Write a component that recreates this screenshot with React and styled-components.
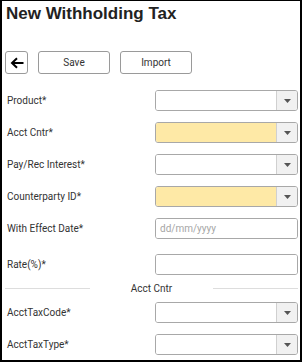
import React from "react";
import styled, { createGlobalStyle } from "styled-components";

const GlobalStyle = createGlobalStyle`
  body {
    margin: 0;
    background: #ffffff;
  }
  * {
    box-sizing: border-box;
  }
`;

const Frame = styled.div`
  width: 302px;
  height: 362px;
  border: 2px solid #000000;
  border-top-width: 1px;
  display: flex;
  flex-direction: column;
  background: #ffffff;
  font-family: Roboto, "Liberation Sans", sans-serif;
  color: #333333;
  overflow: hidden;
`;

const Title = styled.h1`
  margin: 2px 0 0 0;
  padding-left: 4px;
  font-family: "Liberation Sans", Arial, sans-serif;
  font-size: 17px;
  font-weight: bold;
  line-height: 21px;
  color: #222222;
`;

const Toolbar = styled.div`
  display: flex;
  gap: 10px;
  margin-top: 27px;
  padding-left: 3px;
`;

const Button = styled.button`
  width: ${(p) => (p.$square ? "23px" : "72px")};
  height: 23px;
  padding: 0;
  display: flex;
  align-items: center;
  justify-content: center;
  border: 1px solid #9a9a9a;
  border-radius: 3px;
  background: #ffffff;
  font-family: Roboto, "Liberation Sans", sans-serif;
  font-size: 10px;
  color: #333333;
`;

const Form = styled.div`
  display: flex;
  flex-direction: column;
  gap: 11px;
  margin-top: 16px;
  padding: 0 2px 0 5px;
`;

const Row = styled.div`
  display: flex;
  align-items: center;
  height: 21px;
  margin-top: ${(p) => p.$extra || 0}px;
`;

const Label = styled.span`
  flex: 1;
  font-size: 10px;
  color: #333333;
`;

const Field = styled.div`
  width: 143px;
  height: 21px;
  display: flex;
  border: 1px solid #a8a8a8;
  border-radius: 3px;
  overflow: hidden;
`;

const Input = styled.div`
  flex: 1;
  display: flex;
  align-items: center;
  padding-left: 4px;
  background: ${(p) => (p.$required ? "#fee9a6" : "#ffffff")};
  font-size: 10px;
  color: #a6a6a6;
`;

const Toggle = styled.div`
  width: 21px;
  display: flex;
  align-items: center;
  justify-content: center;
  border-left: 1px solid #d0d0d0;
  background: #f1f1f1;
`;

const Divider = styled.div`
  display: flex;
  align-items: center;
  height: 13px;
  margin: -4px 0;
  padding: 0 0 0 0;
  margin-left: -2px;
`;

const Line = styled.div`
  flex: 1;
  height: 1px;
  background: #dddddd;
`;

const DividerText = styled.span`
  padding: 0 41px;
  font-size: 10px;
  color: #333333;
`;

const BackArrow = () => (
  <svg width="14" height="12" viewBox="0 0 14 12">
    <path
      d="M13.5 6H2M7 1.2L2 6l5 4.8"
      fill="none"
      stroke="#000"
      strokeWidth="2"
    />
  </svg>
);

const Caret = () => (
  <svg width="7" height="4" viewBox="0 0 7 4">
    <path d="M0 0h7L3.5 4z" fill="#555" />
  </svg>
);

const Select = ({ required }) => (
  <Field>
    <Input $required={required} />
    <Toggle>
      <Caret />
    </Toggle>
  </Field>
);

const fields = [
  { label: "Product*", type: "select" },
  { label: "Acct Cntr*", type: "select", required: true },
  { label: "Pay/Rec Interest*", type: "select" },
  { label: "Counterparty ID*", type: "select", required: true },
  { label: "With Effect Date*", type: "date" },
  { label: "Rate(%)*", type: "text", extra: 4 },
];

const acctFields = [
  { label: "AcctTaxCode*", type: "select" },
  { label: "AcctTaxType*", type: "select" },
];

const FormRow = ({ label, type, required, extra }) => (
  <Row $extra={extra}>
    <Label>{label}</Label>
    {type === "select" ? (
      <Select required={required} />
    ) : (
      <Field>
        <Input>{type === "date" ? "dd/mm/yyyy" : ""}</Input>
      </Field>
    )}
  </Row>
);

const App = () => {
  return (
    <>
      <GlobalStyle />
      <Frame>
        <Title>New Withholding Tax</Title>
        <Toolbar>
          <Button $square>
            <BackArrow />
          </Button>
          <Button>Save</Button>
          <Button>Import</Button>
        </Toolbar>
        <Form>
          {fields.map((f) => (
            <FormRow key={f.label} {...f} />
          ))}
          <Divider>
            <Line />
            <DividerText>Acct Cntr</DividerText>
            <Line />
          </Divider>
          {acctFields.map((f) => (
            <FormRow key={f.label} {...f} />
          ))}
        </Form>
      </Frame>
    </>
  );
};

export default App;
